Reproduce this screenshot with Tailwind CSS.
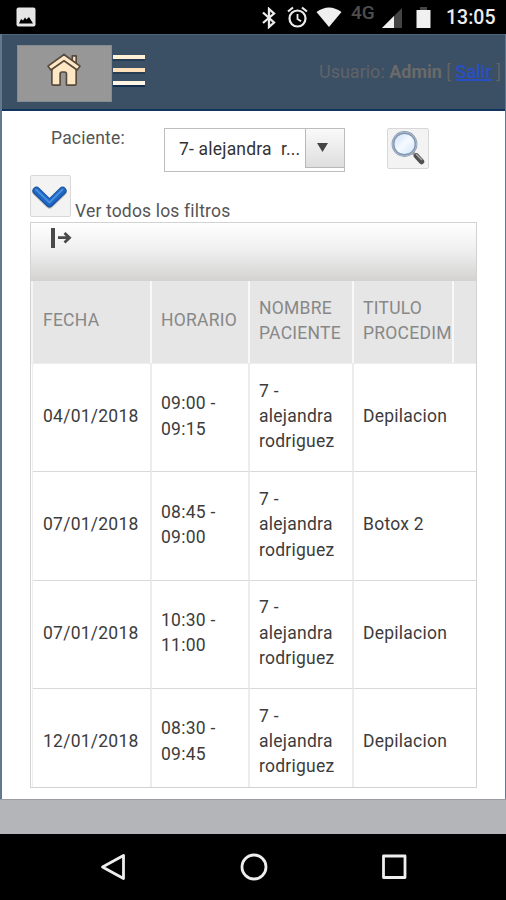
<!DOCTYPE html>
<html lang="es">
<head>
<meta charset="utf-8">
<title>Agenda</title>
<script src="https://cdn.jsdelivr.net/npm/@tailwindcss/browser@4"></script>
</head>
<body class="w-[506px] h-[900px] overflow-hidden bg-black font-['Roboto','Liberation_Sans',sans-serif] flex flex-col">
<!-- Status bar -->
<div class="h-[34px] shrink-0 flex items-start bg-black pl-4">
  <svg class="mt-[7px] shrink-0" width="20" height="20" viewBox="0 0 20 20"><rect x=".5" y=".5" width="19" height="19" rx="2" fill="#e6e6e6"/><path d="M3 16.500l2-4.500 2 1.500 2-3 1.500 2L13 10l4 6.500z" fill="#000"/></svg>
  <svg class="ml-[226px] mt-[7px] shrink-0" width="14" height="22" viewBox="0 0 14 22" fill="none" stroke="#ececec" stroke-width="2.300"><path d="M1 5.500l11 10-5 4.500V2L12 6.500 1 16"/></svg>
  <svg class="ml-[11px] mt-[6px] shrink-0" width="21" height="22" viewBox="0 0 21 22" fill="none" stroke="#ececec" stroke-width="2.200"><circle cx="10.500" cy="12.500" r="8"/><path d="M1 5.500l5-4M20 5.500l-5-4"/><path d="M10.500 8v5l3.500 2.300" stroke-width="1.800"/></svg>
  <svg class="ml-[8px] mt-[7px] shrink-0" width="26" height="20" viewBox="0 0 26 20"><path d="M.500 5Q13-4 25.500 5L13 20z" fill="#efefef"/></svg>
  <span class="ml-[9px] w-[26px] mt-[2px] text-[19px] leading-[22px] font-medium text-[#4e4e4e]">4G</span>
  <svg class="ml-[5px] mt-[8px] shrink-0" width="21" height="20" viewBox="0 0 21 20"><path d="M20 0v20H0z" fill="#444"/><path d="M12 8v12H0z" fill="#f0f0f0"/></svg>
  <svg class="ml-[13px] mt-[7px] shrink-0" width="15" height="21" viewBox="0 0 15 21"><path d="M4 0h7v3H4z" fill="#444"/><path d="M.500 3h14v18H.500z" fill="#f0f0f0"/></svg>
  <span class="ml-[15px] mt-[7px] text-[19.5px] leading-[22px] font-medium text-[#ededed] whitespace-nowrap">13:05</span>
</div>

<div class="h-[765px] shrink-0 flex flex-col bg-white border-l-2 border-r border-[#627890] overflow-hidden">
  <!-- Header -->
  <header class="h-[77px] shrink-0 flex items-start bg-[#3b5065] border-t border-t-[#4d647b] border-b-2 border-b-[#12335c] pl-[15px]">
    <div class="mt-[10px] w-[95px] h-[57px] bg-[#979797] border border-[#858b8f] shrink-0 pl-[29px] pt-[7px]">
      <svg width="35" height="35" viewBox="0 0 36 36" fill="#ffe6c4" stroke="#55493c" stroke-width="1.700" stroke-linejoin="round"><path d="M26 3h4v8l-4-3z"/><path d="M5 16v16q0 1 1 1h7.500V21.500q0-2 2-2h2.500q2 0 2 2V33H29q1 0 1-1V16L17.500 7z"/><path d="M17.500 1.500L1 13.500l3 4 13.500-9.500L31 17.500l3-4z"/></svg>
    </div>
    <div class="mt-[20px] ml-px w-8 flex flex-col gap-[9px] shrink-0">
      <i class="block h-[4px] bg-[#ffefd6] shadow-[0_2px_0_#263c52]"></i>
      <i class="block h-[4px] bg-[#ffe0bb] shadow-[0_2px_0_#263c52]"></i>
      <i class="block h-[4px] bg-[#fff5e4] shadow-[0_2px_0_#132f50]"></i>
    </div>
    <div class="ml-auto mr-[4px] mt-[26px] text-[18px] leading-[22px] text-[#606367] whitespace-nowrap">Usuario: <b class="font-bold text-[#6a6a6a]">Admin</b> [ <a class="underline decoration-2 font-medium text-[#294fc5]">Salir</a> ]</div>
  </header>

  <!-- Filters -->
  <div class="h-[63px] shrink-0 flex items-start pl-[49px] text-[#555]">
    <span class="w-[113px] mt-[15px] text-[17.5px] leading-[24px] tracking-[0.2px]">Paciente:</span>
    <div class="mt-[17px] w-[181px] h-[44px] flex border border-[#bdbdbd] shrink-0">
      <span class="w-[140px] pl-[14px] pt-[8px] text-[17.5px] leading-[24px] tracking-[0.2px] text-[#333] whitespace-pre">7- alejandra  r...</span>
      <span class="w-[39px] h-[39px] bg-linear-to-b from-[#fafafa] to-[#dedede] border-l border-b border-[#b8b8b8] pl-[11px] pt-[14px]"><svg width="11" height="9" viewBox="0 0 11 9"><path d="M0 0h11L5.500 9z" fill="#444"/></svg></span>
    </div>
    <div class="ml-[42px] mt-[17px] w-[42px] h-[41px] bg-[#f3f3f3] border border-[#d8d8d8] rounded-[2px] shrink-0">
      <svg width="40" height="39" viewBox="0 0 40 39"><defs><linearGradient id="lens" x1="0" y1="0" x2="1" y2="1"><stop offset="0" stop-color="#c9dcf8"/><stop offset=".5" stop-color="#f4faff"/><stop offset="1" stop-color="#cfe2fb"/></linearGradient></defs><path d="M24.500 23.500l4 3.500" stroke="#999" stroke-width="3"/><path d="M28.500 27l5 5.500" stroke="#505050" stroke-width="5.500" stroke-linecap="round"/><path d="M28.500 25.500l5 5" stroke="#aaa" stroke-width="1.500" stroke-linecap="round"/><circle cx="16.500" cy="15" r="11.500" fill="url(#lens)" stroke="#8397b0" stroke-width="2.800"/><circle cx="16.500" cy="15" r="12" fill="none" stroke="#aebdce" stroke-width="1"/></svg>
    </div>
  </div>
  <div class="h-[48px] shrink-0 flex items-start pl-[28px]">
    <div class="mt-px w-[41px] h-[42px] bg-[#f3f3f3] border border-[#d8d8d8] rounded-[2px] shrink-0">
      <svg width="39" height="40" viewBox="0 0 39 40" fill="none" stroke-linecap="round" stroke-linejoin="round"><path d="M5.500 15.500L18.500 28 31.500 15.500" stroke="#777" stroke-width="9" opacity=".4"/><path d="M5.500 14.800L18.500 27.500 31.500 14.800" stroke="#164f9c" stroke-width="8"/><path d="M5.500 14.500L18.500 27 31.500 14.500" stroke="#1e68c5" stroke-width="6"/><path d="M5 13.500l13.500 13L31.500 13.500" stroke="#4c8fdc" stroke-width="1.800"/></svg>
    </div>
    <span class="ml-[4px] mt-[25px] text-[17.5px] leading-[24px] tracking-[0.17px] text-[#555] whitespace-nowrap">Ver todos los filtros</span>
  </div>

  <!-- Grid -->
  <div class="ml-[28px] w-[447px] h-[566px] shrink-0 border border-[#d2d2d2] flex flex-col overflow-hidden">
    <div class="h-[58px] shrink-0 bg-linear-to-b from-white via-[#eeeeee] to-[#d3d2d1] pl-[20px] pt-[5px]">
      <svg width="21" height="20" viewBox="0 0 21 20"><path d="M0 0h4v20H0z" fill="#4a4a4a"/><path d="M7 9.700h10M13.500 5l5 4.700-5 4.700" fill="none" stroke="#4a4a4a" stroke-width="2.800"/></svg>
    </div>
    <div class="h-[83px] shrink-0 grid grid-cols-[121px_98px_104px_100px_22px] items-stretch bg-[#e6e6e6] border-b border-[#ededed] text-[17.5px] leading-[25.3px] tracking-[0.25px] text-[#888]">
      <div class="flex items-center pl-[10px] pb-[2px] border-r-2 border-l-2 border-l-[#f5f5f5] border-r-[#f8f8f8]">FECHA</div>
      <div class="flex items-center pl-[9px] pb-[2px] border-r-2 border-[#f8f8f8]">HORARIO</div>
      <div class="flex items-center pl-[9px] pb-[2px] border-r-2 border-[#f8f8f8]">NOMBRE<br>PACIENTE</div>
      <div class="flex items-center pl-[9px] pb-[2px] border-r-2 border-[#f8f8f8] overflow-hidden">TITULO<br>PROCEDIM</div>
      <div></div>
    </div>
    <div class="grow ml-px grid grid-cols-[119px_98px_104px_122px] auto-rows-[108.3px] text-[17.5px] leading-[25.3px] tracking-[0.25px] text-[#3c3c3c] [&>div]:flex [&>div]:items-center [&>div]:pl-[9px] [&>div]:pb-[2px] [&>div]:border-r-2 [&>div]:border-b [&>div]:border-r-[#ececec] [&>div]:border-b-[#d9d9d9] [&>div:nth-child(4n)]:border-r-0 [&>div:nth-child(4n+1)]:pl-[10px] border-l border-[#eeeeee]">
      <div>04/01/2018</div><div>09:00 -<br>09:15</div><div>7 -<br>alejandra<br>rodriguez</div><div>Depilacion</div>
      <div>07/01/2018</div><div>08:45 -<br>09:00</div><div>7 -<br>alejandra<br>rodriguez</div><div>Botox 2</div>
      <div>07/01/2018</div><div>10:30 -<br>11:00</div><div>7 -<br>alejandra<br>rodriguez</div><div>Depilacion</div>
      <div>12/01/2018</div><div>08:30 -<br>09:45</div><div>7 -<br>alejandra<br>rodriguez</div><div>Depilacion</div>
    </div>
  </div>
</div>

<div class="h-[35px] shrink-0 bg-[#b4b5b9] border-t border-[#9b9da2]"></div>

<!-- Navigation bar -->
<nav class="h-[66px] shrink-0 bg-black flex items-start pt-[19px] pl-[100px]">
  <svg width="26" height="28" viewBox="0 0 26 28" fill="none" stroke="#eee" stroke-width="2.800" stroke-linejoin="round"><path d="M2.500 14L23.500 2.500v23z"/></svg>
  <svg class="ml-[114px]" width="28" height="28" viewBox="0 0 28 28" fill="none" stroke="#eee" stroke-width="2.800"><circle cx="14" cy="14" r="12"/></svg>
  <svg class="ml-[113px]" width="26" height="28" viewBox="0 0 26 28" fill="none" stroke="#eee" stroke-width="2.800" stroke-linejoin="round"><path d="M2.500 3h21.500v21.500h-21.500z"/></svg>
</nav>
</body>
</html>
